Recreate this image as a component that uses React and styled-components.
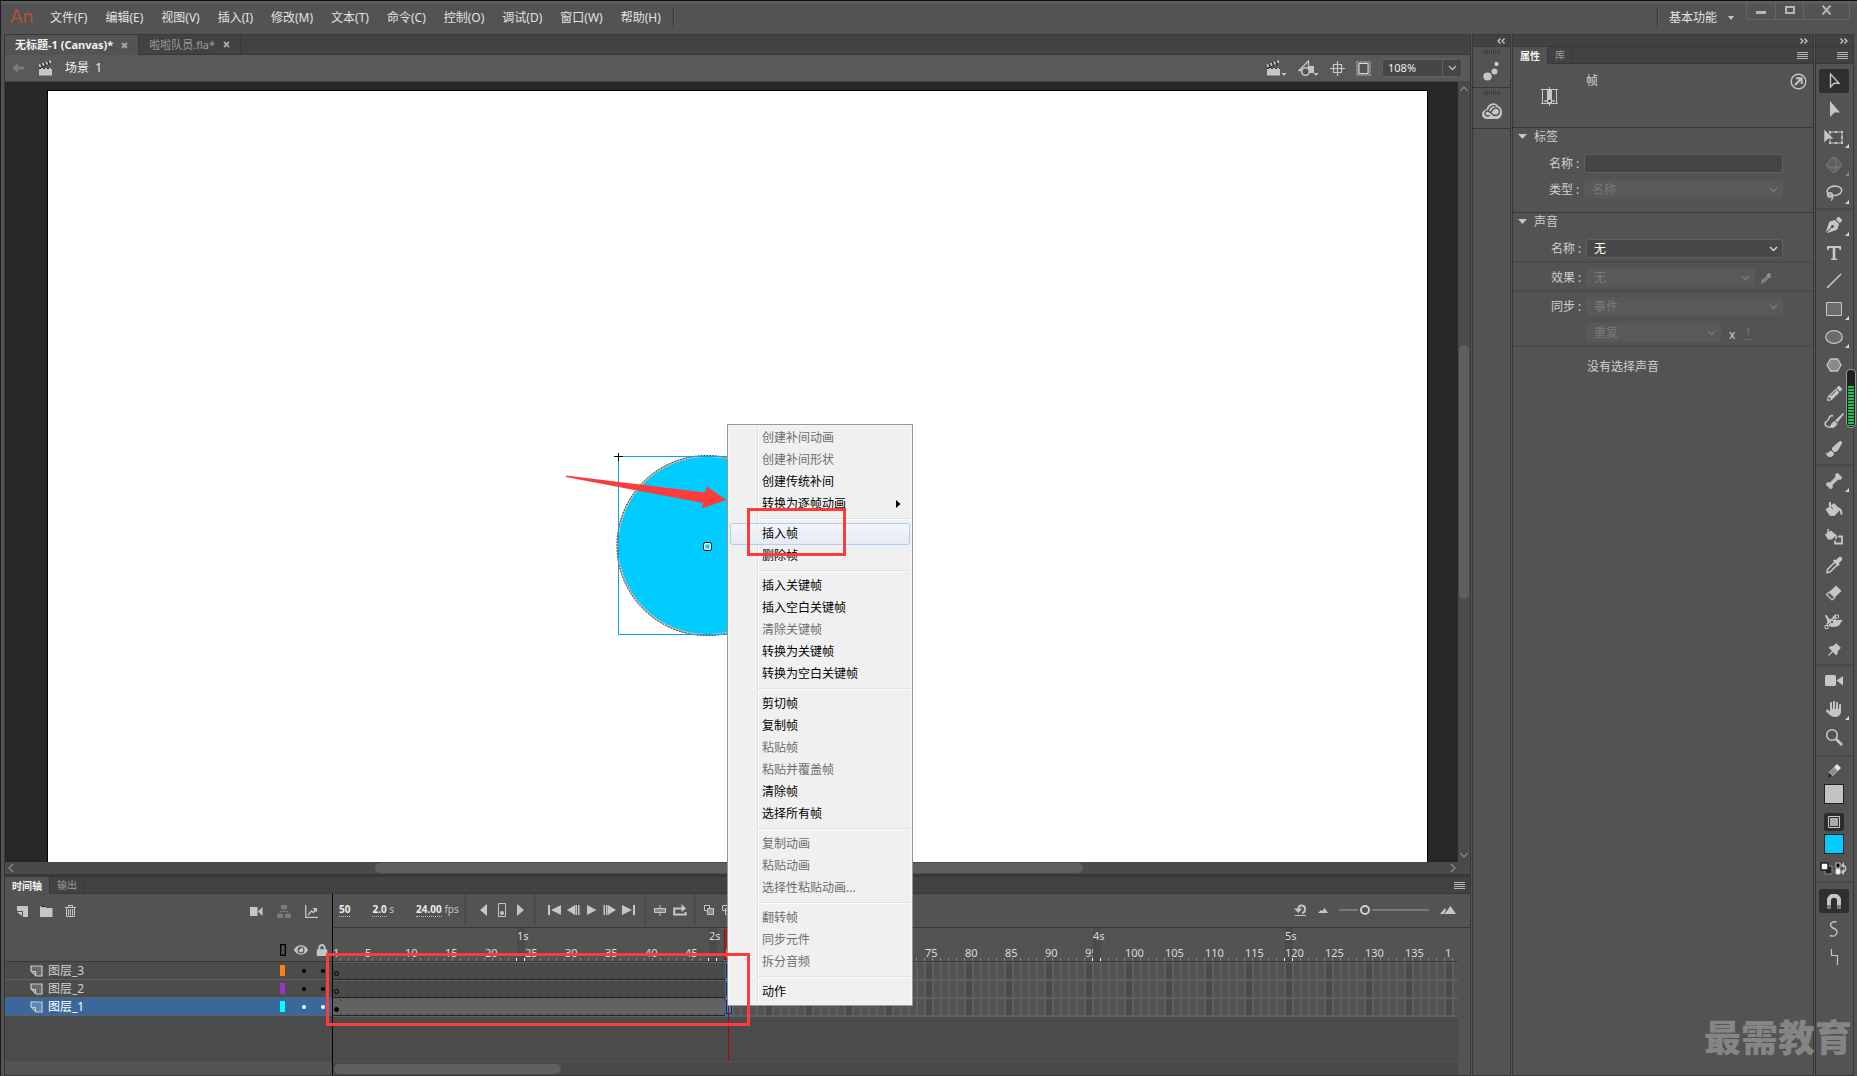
import React from "react";
import styled, { createGlobalStyle, css } from "styled-components";
import { Bone } from "lucide-react";
import {
  FaPenNib,
  FaPencilAlt,
  FaPaintBrush,
  FaFillDrip,
  FaEyeDropper,
  FaEye,
  FaLock,
} from "react-icons/fa";
import { FaHand } from "react-icons/fa6";
import { AiFillPushpin } from "react-icons/ai";

const c = {
  panel: "#535353",
  strip: "#424242",
  line: "#383838",
  soft: "#4a4a4a",
  icon: "#c6c6c6",
  text: "#d6d6d6",
  dim: "#7a7a7a",
  red: "#fc3b3a",
  cyan: "#00ccff",
};

const FRAME = 8;
const FRAME_COUNT = 140;
const PLAYHEAD = 50;

const Global = createGlobalStyle`
  *, *::before, *::after { box-sizing: border-box; }
  html, body { margin: 0; height: 100%; }
  body {
    background: ${c.panel};
    color: ${c.text};
    font: 12px/16px "Noto Sans", "Noto Sans CJK SC", sans-serif;
    overflow: hidden;
  }
  button, input, select { font: inherit; color: inherit; margin: 0; border-radius: 0; }
  button { background: none; border: 0; padding: 0; }
  ul { list-style: none; margin: 0; padding: 0; }
  svg { display: block; flex: none; }
`;

/* ---------- window frame ---------- */

const Window = styled.div`
  position: relative;
  display: flex;
  flex-direction: column;
  height: 100vh;
  min-height: 640px;
  background: ${c.panel};
  border-left: 1px solid #1c1c1c;
  overflow: hidden;
`;

const TitleBar = styled.header`
  display: flex;
  flex: none;
  height: 34px;
  padding: 0 7px 0 9px;
  border-top: 1px solid #111;
  box-shadow: inset 0 3px 0 #5c5c5c;
`;

const Logo = styled.span`
  width: 40px;
  font: 19px/30px Lato, sans-serif;
  color: #b0503a;
`;

const MenuBar = styled.nav`
  display: flex;
  align-items: center;
  gap: 18px;
  height: 33px;
  color: #e2e2e2;
`;

const Rule = styled.span`
  width: 2px;
  height: 20px;
  margin: 6px 0 0 ${(p) => p.$left || 0}px;
  background: #3a3a3a;
  border-right: 1px solid #5f5f5f;
`;

const Workspace = styled.button`
  display: flex;
  align-items: center;
  gap: 11px;
  height: 34px;
  margin: 0 12px 0 10px;
  color: #e2e2e2;
`;

const Spacer = styled.span`
  flex: 1;
`;

const WindowButtons = styled.div`
  display: flex;
  height: 19px;
  border: 1px solid #666;
  border-top: 0;
  border-radius: 0 0 4px 4px;
`;

const WindowButton = styled.button`
  display: grid;
  place-items: center;
  width: ${(p) => p.$w || 28}px;
  color: #b5b5b5;
  & + & { border-left: 1px solid #666; }
`;

const Body = styled.div`
  display: flex;
  flex: 1;
  min-height: 0;
  gap: 1px;
  padding: 0 3px;
`;

const Panel = styled.section`
  display: flex;
  flex-direction: column;
  flex: none;
  min-width: 0;
  border: 1px solid ${c.line};
  width: ${(p) => p.$w}px;
`;

const Main = styled(Panel).attrs({ as: "main" })`
  flex: 1;
  width: auto;
`;

/* ---------- tabs ---------- */

const TabStrip = styled.div`
  display: flex;
  flex: none;
  height: ${(p) => p.$h || 17}px;
  background: ${c.strip};
  border-bottom: 1px solid ${c.line};
  font-size: ${(p) => p.$size || 10}px;
`;

const Tab = styled.button`
  display: flex;
  align-items: center;
  gap: 8px;
  padding: 0 ${(p) => p.$pad || 7}px;
  border-right: 1px solid ${c.line};
  color: #9c9c9c;
  line-height: 14px;
  ${(p) =>
    p.$on &&
    css`
      background: ${c.panel};
      margin-bottom: -1px;
      color: #f2f2f2;
      font-weight: 700;
    `}
`;

const StripEnd = styled.button`
  margin-left: auto;
  padding: 0 ${(p) => p.$pad || 5}px;
`;

const Collapse = styled.button`
  display: flex;
  align-items: center;
  justify-content: flex-end;
  flex: none;
  height: 12px;
  padding-right: 5px;
  background: ${c.strip};
  border-bottom: 1px solid ${c.line};
`;

/* ---------- document area ---------- */

const EditBar = styled.div`
  display: flex;
  align-items: center;
  flex: none;
  height: 27px;
  padding: 0 8px 0 7px;
  background: #595959;
  border-bottom: 1px solid #454545;
  color: #f0f0f0;
`;

const Crumb = styled.span`
  display: flex;
  align-items: center;
  gap: 12px;
`;

const ViewTools = styled.div`
  display: flex;
  align-items: center;
  gap: 11px;
  margin-left: auto;
`;

const ToolIcon = styled.button`
  display: grid;
  place-items: center;
`;

const Zoom = styled.div`
  display: grid;
  grid-template-columns: 60px 18px;
  height: 18px;
  border: 1px solid #616161;
  border-radius: 3px;
  background: #454545;
  input {
    min-width: 0;
    border: 0;
    border-right: 1px solid #616161;
    background: none;
    padding: 0 5px;
    font-size: 11px;
    line-height: 16px;
  }
`;

const StageRow = styled.div`
  display: flex;
  flex: 1;
  min-height: 0;
`;

const Pasteboard = styled.div`
  display: flex;
  flex: 1;
  min-width: 0;
  padding: 8px 30px 0 42px;
  background: #282828;
`;

const Artboard = styled.div`
  position: relative;
  flex: 1;
  background: #fff;
  border: 1px solid #000;
  border-bottom: 0;
`;

const Shape = styled.svg`
  position: absolute;
  left: 561px;
  top: 356px;
`;

const VScroll = styled.div`
  display: flex;
  flex-direction: column;
  align-items: center;
  width: 12px;
  padding: 3px 0;
  background: ${c.soft};
`;

const VThumb = styled.span`
  flex: 253 0 0;
  width: 10px;
  border-radius: 5px;
  background: #5f5f5f;
`;

const HScroll = styled.div`
  display: flex;
  align-items: center;
  flex: none;
  height: 12px;
  padding: 0 14px 0 3px;
  background: ${c.soft};
`;

const HThumb = styled.span`
  flex: ${(p) => p.$grow} 0 0;
  height: 10px;
  border-radius: 5px;
  background: #5f5f5f;
`;

const Gap = styled.span`
  flex: ${(p) => p.$grow} 0 0;
`;

/* ---------- timeline ---------- */

const Timeline = styled.div`
  display: flex;
  flex-direction: column;
  flex: none;
  height: 201px;
  border-top: 3px solid ${c.line};
`;

const TimelineBody = styled.div`
  display: flex;
  flex: 1;
  min-height: 0;
`;

const LayerPane = styled.div`
  display: flex;
  flex-direction: column;
  flex: none;
  width: 328px;
  border-right: 1px solid #000;
`;

const LayerTools = styled.div`
  display: flex;
  align-items: center;
  height: 34px;
  padding: 0 14px 0 12px;
  gap: 12px;
`;

const LayerHead = styled.div`
  display: flex;
  align-items: center;
  justify-content: flex-end;
  gap: 8px;
  height: 33px;
  padding: 10px 4px 0 0;
`;

const LayerRow = styled.li`
  display: flex;
  align-items: center;
  height: 18px;
  padding: 0 7px 0 25px;
  border-top: 1px solid ${(p) => (p.$first ? c.line : "#606060")};
  background: ${(p) => (p.$on ? "#3b689b" : "#4c4c4c")};
  color: ${(p) => (p.$on ? "#fff" : "#d0d0d0")};
  gap: 5px;
`;

const Chip = styled.span`
  width: 5px;
  height: 11px;
  margin: 0 12px 0 auto;
  background: ${(p) => p.$c};
`;

const Dot = styled.span`
  width: 4px;
  height: 4px;
  border-radius: 2px;
  margin-right: ${(p) => (p.$last ? 0 : 10)}px;
  background: ${(p) => (p.$on ? "#fff" : "#000")};
`;

const PaneFill = styled.div`
  flex: 1;
  border-top: 1px solid #606060;
  border-bottom: ${(p) => p.$foot || 0}px solid ${c.panel};
  background: #4b4b4b;
`;

const FramePane = styled.div`
  display: flex;
  flex-direction: column;
  flex: 1;
  min-width: 0;
`;

const Transport = styled.div`
  display: flex;
  flex: none;
  height: 34px;
  padding-right: 14px;
  border-bottom: 1px solid ${c.line};
`;

const Group = styled.div`
  display: flex;
  flex: none;
  align-items: center;
  width: ${(p) => (p.$w ? `${p.$w}px` : "auto")};
  height: 32px;
  gap: ${(p) => p.$gap || 6}px;
  padding-left: ${(p) => p.$pad || 10}px;
  ${(p) => p.$w && "border-right: 2px solid #4a4a4a;"}
  ${(p) => p.$end && "margin-left: auto; padding: 0;"}
`;

const Hot = styled.button`
  font-size: 10px;
  line-height: 13px;
  color: ${(p) => (p.$off ? c.dim : "#c6c6c6")};
  white-space: pre;
  b {
    display: inline-block;
    font-weight: ${(p) => (p.$off ? 400 : 700)};
    color: ${(p) => (p.$off ? c.dim : "#ececec")};
    border-bottom: 1px dotted ${(p) => (p.$off ? c.dim : "#bbb")};
  }
`;

const Slider = styled.input`
  appearance: none;
  width: 90px;
  height: 12px;
  background: linear-gradient(90deg, #7a7a7a 19px, transparent 19px 33px, #7a7a7a 33px) center / 100% 2px no-repeat;
  &::-webkit-slider-thumb {
    appearance: none;
    width: 10px;
    height: 10px;
    border-radius: 5px;
    border: 2px solid #cfcfcf;
    background: transparent;
  }
`;

const FrameArea = styled.div`
  position: relative;
  flex: 1;
  display: flex;
  flex-direction: column;
  margin-right: 12px;
  overflow: hidden;
  background: #4b4b4b;
`;

const Ruler = styled.div`
  display: flex;
  flex: none;
  width: ${FRAME * FRAME_COUNT}px;
  height: 33px;
  overflow: hidden;
  font-size: 11px;
`;

const RulerBox = styled.div`
  flex: none;
  background: ${c.panel};
  border-bottom: 1px solid ${c.line};
`;

const RulerCell = styled.span`
  flex: none;
  width: ${FRAME}px;
  height: 33px;
  padding-top: 1px;
  white-space: nowrap;
  line-height: 13px;
  color: #dcdcdc;
  background: linear-gradient(${(p) => (p.$bright ? "#fff" : "#8a8a8a")}, ${(p) => (p.$bright ? "#fff" : "#8a8a8a")})
    right bottom / 1px 3px no-repeat ${(p) => (p.$second ? "#4b4b4b" : "transparent")};
`;

const Second = styled.span`
  display: block;
  height: 17px;
`;

const Tracks = styled.ul`
  flex: none;
  border-top: 1px solid #5f5f5f;
`;

const Track = styled.li`
  display: flex;
  height: 18px;
  border-bottom: 2px solid #5f5f5f;
  background:
    linear-gradient(90deg, #5f5f5f 1px, transparent 1px 7px, #5f5f5f 7px) 0 0 / 8px 100%,
    linear-gradient(90deg, ${c.panel} 32px, #4a4a4a 32px) 0 0 / 40px 100%;
`;

const Span = styled.span`
  display: flex;
  align-items: flex-end;
  width: ${(p) => p.$frames * FRAME}px;
  height: 17px;
  padding: 0 0 3px 1px;
  border-bottom: 1px solid #262626;
  background:
    linear-gradient(90deg, transparent 7px, #3e3e3e 7px) 0 0 / 8px 2px repeat-x,
    linear-gradient(90deg, transparent 7px, #3e3e3e 7px) 0 100% / 8px 2px repeat-x,
    ${(p) => (p.$on ? "#626262" : "#4a4a4a")};
`;

const Key = styled.span`
  width: 5px;
  height: 5px;
  border-radius: 3px;
  border: 1px solid #000;
  background: ${(p) => (p.$full ? "#000" : "transparent")};
`;

const EndFrame = styled.span`
  width: 8px;
  height: 17px;
  border: 1px solid #3f6fa8;
  border-width: 1px 1px 2px;
  background: #4a7ab5;
  box-shadow: inset 0 0 0 1px #16283f;
`;

const Playhead = styled.div`
  position: absolute;
  left: ${(PLAYHEAD - 1) * FRAME - 1}px;
  top: 2px;
  bottom: 14px;
  width: 10px;
  background: linear-gradient(#b50000, #b50000) 4px 0 / 1px 100% no-repeat;
  &::before {
    content: "";
    display: block;
    height: 30px;
    border: 1px solid #c00000;
    background: rgba(190, 0, 0, 0.35);
  }
`;

const FrameScroll = styled.div`
  display: flex;
  align-items: center;
  height: 14px;
  margin-top: auto;
  padding: 0 1px;
  border-top: 1px solid #535353;
  background: #494949;
`;

/* ---------- side panels ---------- */

const DockItem = styled.button`
  display: flex;
  flex-direction: column;
  align-items: center;
  height: ${(p) => p.$h}px;
  padding-top: 3px;
  gap: ${(p) => p.$gap || 7}px;
  border-bottom: 1px solid ${c.line};
`;

const Grip = styled.span`
  width: 18px;
  height: 4px;
  background: repeating-linear-gradient(90deg, #3e3e3e 0 1px, transparent 1px 2px);
`;

const Summary = styled.div`
  display: flex;
  align-items: flex-start;
  height: 64px;
  padding: 9px 6px 0 28px;
  border-bottom: 1px solid ${c.line};
  > svg:first-child { margin: 14px 28px 0 0; }
  > button { margin-left: auto; }
`;

const Section = styled.section`
  border-bottom: ${(p) => (p.$open ? 0 : 1)}px solid ${c.line};
`;

const SectionHead = styled.button`
  display: flex;
  align-items: center;
  gap: 7px;
  height: 17px;
  padding-left: 5px;
  color: #cfcfcf;
`;

const Fields = styled.div`
  display: grid;
  gap: 7px;
  padding: ${(p) => p.$top || 5}px 30px ${(p) => p.$bottom || 3}px ${(p) => p.$left || 38}px;
  ${(p) => p.$rule && "border-bottom: 2px solid #4b4b4b;"}
`;

const Field = styled.div`
  display: flex;
  align-items: center;
  height: 19px;
  color: #cfcfcf;
  label { width: 35px; }
`;

const TextInput = styled.input`
  flex: 1;
  min-width: 0;
  height: 19px;
  border: 1px solid #606060;
  border-radius: 3px;
  background: #454545;
  padding: 0 7px;
`;

const SelectBox = styled.div`
  display: grid;
  flex: ${(p) => (p.$w ? `0 0 ${p.$w}px` : 1)};
  align-items: center;
  height: 19px;
  border: 1px solid ${(p) => (p.$off ? "#595959" : "#606060")};
  border-radius: 3px;
  background: ${(p) => (p.$off ? "#595959" : "#484848")};
  color: ${(p) => (p.$off ? c.dim : "#fff")};
  > select {
    grid-area: 1 / 1;
    appearance: none;
    height: 17px;
    border: 0;
    background: none;
    padding: 0 7px;
    opacity: 1;
    line-height: 16px;
  }
  > svg {
    grid-area: 1 / 1;
    justify-self: end;
    margin-right: 4px;
    pointer-events: none;
  }
`;

const Multiply = styled.span`
  margin: 4px 10px 0 8px;
`;

const Note = styled.p`
  margin: 12px 0 0 74px;
  color: #cfcfcf;
`;

/* ---------- tool bar ---------- */

const ToolGroup = styled.div`
  display: flex;
  flex-direction: column;
  align-items: center;
  padding: ${(p) => p.$top || 1}px 1px ${(p) => p.$bottom || 1}px 0;
  border-bottom: ${(p) => (p.$last ? 0 : 2)}px solid #4a4a4a;
`;

const Tool = styled.button`
  display: grid;
  place-items: center;
  width: 30px;
  height: ${(p) => (p.$on ? 24 : 28)}px;
  margin: ${(p) => (p.$on ? 2 : 0)}px 0;
  border-radius: 3px;
  color: ${(p) => (p.$off ? "#727272" : c.icon)};
  background: ${(p) => (p.$on ? "#2f2f2f" : "none")};
  > * { grid-area: 1 / 1; }
`;

const Corner = styled.svg`
  place-self: end;
  margin: 0 0 3px 0;
`;

const Swatch = styled.button`
  width: 20px;
  height: 20px;
  margin: ${(p) => p.$top || 0}px 0 ${(p) => p.$bottom || 0}px;
  border: 1px solid #222;
  background: ${(p) => p.$c};
`;

const FillMode = styled.button`
  display: grid;
  place-items: center;
  width: 20px;
  height: 18px;
  border-radius: 3px;
  background: #2c2c2c;
`;

/* ---------- floating parts ---------- */

const Menu = styled.ul`
  position: absolute;
  left: 726px;
  top: 424px;
  width: 186px;
  padding: 2px;
  border: 1px solid #979797;
  background: linear-gradient(90deg, #f0f0f0 29px, #e0e0e0 29px 30px, #fff 30px 31px, #f0f0f0 31px);
  box-shadow: inset 0 0 0 1px #f5f5f5;
  color: #000;
`;

const MenuItem = styled.button`
  display: flex;
  align-items: center;
  justify-content: space-between;
  width: 180px;
  height: 22px;
  padding: 0 8px 0 31px;
  border: 1px solid transparent;
  border-radius: 3px;
  color: ${(p) => (p.disabled ? "#6d6d6d" : "#000")};
  ${(p) =>
    p.$hot &&
    css`
      border-color: #aecff7;
      background: linear-gradient(rgba(245, 247, 250, 0.7), rgba(225, 234, 246, 0.8));
    `}
`;

const MenuRule = styled.li`
  height: 2px;
  margin: 3px 0 3px 28px;
  background: #e0e0e0;
  border-bottom: 1px solid #fff;
`;

const Marker = styled.div`
  position: absolute;
  left: ${(p) => p.$x}px;
  top: ${(p) => p.$y}px;
  width: ${(p) => p.$w}px;
  height: ${(p) => p.$h}px;
  border: 3px solid ${c.red};
  pointer-events: none;
`;

const ArrowMark = styled.svg`
  position: absolute;
  left: 565px;
  top: 474px;
  pointer-events: none;
`;

const Meter = styled.div`
  position: absolute;
  right: 1px;
  top: 369px;
  width: 10px;
  height: 59px;
  padding: 16px 1px 1px;
  border: 1px solid #9a9a9a;
  border-radius: 4px;
  background: #1f1f1f;
  &::before {
    content: "";
    display: block;
    height: 100%;
    background: repeating-linear-gradient(#1fbf5a 0 2px, #12331d 2px 3px);
  }
`;

const Watermark = styled.div`
  position: absolute;
  right: 5px;
  bottom: 18px;
  font: 900 37px/44px "Noto Sans CJK SC", sans-serif;
  color: rgba(190, 190, 190, 0.48);
  pointer-events: none;
`;

/* ---------- drawings ---------- */

const Svg = ({ w = 20, h = w, vb, children, ...rest }) => (
  <svg width={w} height={h} viewBox={vb || `0 0 ${w} ${h}`} fill="none" stroke="none" aria-hidden="true" {...rest}>
    {children}
  </svg>
);

const Chevron = ({ color = "#bdbdbd" }) => (
  <Svg w={9} h={6}>
    <path d="M1 1l3.5 3.5L8 1" stroke={color} strokeWidth="1.3" />
  </Svg>
);

const ScrollArrow = ({ d }) => (
  <Svg w={8} h={8}>
    <path d={d} stroke="#8e8e8e" strokeWidth="1.2" />
  </Svg>
);

const Burger = () => (
  <Svg w={11} h={9}>
    <path d="M0 1.5h11M0 3.5h11M0 5.5h11M0 7.5h11" stroke="#b5b5b5" shapeRendering="crispEdges" />
  </Svg>
);

const Twist = ({ left }) => (
  <Svg w={8} h={6}>
    <path
      d={left ? "M3.5 .5L1 3l2.500 2.500M7.500 .5L5 3l2.500 2.500" : "M.5 .5L3 3 .5 5.500M4.500 .5L7 3 4.500 5.500"}
      stroke="#c8c8c8"
      strokeWidth="1.300"
    />
  </Svg>
);

const Close = () => (
  <Svg w={7} h={7}>
    <path d="M1 1l5 5M6 1L1 6" stroke="#a9a9a9" strokeWidth="1.8" />
  </Svg>
);

const Clapper = ({ drop }) => (
  <Svg w={drop ? 22 : 16} h={17}>
    <path d="M2 8h13v7.500H2z" fill={c.icon} />
    <path d="M2 7L14 1.500" stroke="#2c2c2c" strokeWidth="4" />
    <path d="M2 6L14 1.500" stroke={c.icon} strokeWidth="3" strokeDasharray="2 1.600" />
    <path d="M2 8.500h13" stroke="#2c2c2c" strokeWidth="1" strokeDasharray="2 2" />
    {drop && <path d="M16.500 13h5L19 16z" fill={c.icon} />}
  </Svg>
);

const Corn = ({ off }) => (
  <Corner width="4" height="4" viewBox="0 0 4 4" aria-hidden="true">
    <path d="M4 0v4H0z" fill={off ? "#858585" : "#dcdcdc"} />
  </Corner>
);

const tri = (d) => <path d={d} fill={c.icon} />;

const LayerGlyph = ({ on }) => (
  <Svg w={13} h={12}>
    <path d="M1 1h11v10H6L1 6z" fill={on ? "#5b86bd" : "#6a6a6a"} stroke="#c9c9c9" strokeWidth="1.200" />
    <path d="M1 6.500h4.500V11" stroke="#c9c9c9" strokeWidth="1.200" />
    <path d="M1 7.500L5 11.500H1z" fill={on ? "#3b689b" : "#4c4c4c"} />
  </Svg>
);

const tools1 = [
  {
    name: "选择工具",
    on: true,
    art: (
      <Svg w={18} h={20}>
        <path d="M5.500 3v13l3.600-3.800H14z" stroke={c.icon} strokeWidth="1.400" />
      </Svg>
    ),
  },
  {
    name: "部分选取工具",
    art: (
      <Svg w={18} h={20}>
        <path d="M5 2v16l4.500-4.500H15z" fill={c.icon} />
      </Svg>
    ),
  },
  {
    name: "任意变形工具",
    corner: true,
    art: (
      <Svg w={20} h={18}>
        <path d="M6 4h12v11H6z" stroke={c.icon} />
        <path d="M5 3h2v2H5zM11 3h2v2h-2zM17 3h2v2h-2zM17 8.500h2v2h-2zM17 14h2v2h-2zM11 14h2v2h-2zM5 14h2v2H5z" fill={c.icon} />
        <path d="M0 1v14l4-4h6z" fill={c.icon} stroke={c.panel} strokeWidth=".6" />
      </Svg>
    ),
  },
  {
    name: "3D 旋转工具",
    off: true,
    corner: true,
    art: (
      <Svg w={18}>
        <path d="M9 1.500l3 1.500 4 5v2l-4 4.500-3 2-3-2L2 10V8l4-5z" stroke="#727272" fill="#5f5f5f" strokeWidth="1.200" />
        <path d="M1 9.500c4 3 12 3 16 0M9 1c3 4 3 12 0 16" stroke="#757575" strokeWidth="1.300" />
      </Svg>
    ),
  },
  {
    name: "套索工具",
    corner: true,
    art: (
      <Svg w={18}>
        <path d="M4 11C-.5 7 4 2.200 9.500 2c5 0 8 2.500 7 5.500-1 2.800-5 4.300-8.500 4" stroke={c.icon} strokeWidth="1.500" />
        <circle cx="5" cy="11" r="2.300" stroke={c.icon} strokeWidth="1.400" />
        <path d="M3 10.500l4 1c1.500 2 0 4-1 5" stroke={c.icon} strokeWidth="1.300" />
      </Svg>
    ),
  },
];

const tools2 = [
  { name: "钢笔工具", corner: true, art: <FaPenNib size={16} /> },
  {
    name: "文本工具",
    art: (
      <Svg w={16}>
        <path d="M1 1h14v4h-1.500l-.5-2H9.300v10.500H11V15H5v-1.500h1.700V3H3l-.5 2H1z" fill={c.icon} />
      </Svg>
    ),
  },
  {
    name: "线条工具",
    art: (
      <Svg w={16}>
        <path d="M1 15L15 1" stroke={c.icon} strokeWidth="1.600" />
      </Svg>
    ),
  },
  {
    name: "矩形工具",
    corner: true,
    art: (
      <Svg w={16} h={14}>
        <path d="M.5 .5h15v13H.5z" fill="#6c6c6c" stroke={c.icon} />
      </Svg>
    ),
  },
  {
    name: "椭圆工具",
    corner: true,
    art: (
      <Svg w={18} h={14}>
        <ellipse cx="9" cy="7" rx="8.300" ry="6.300" fill="#6c6c6c" stroke={c.icon} strokeWidth="1.200" />
      </Svg>
    ),
  },
  {
    name: "多角星形工具",
    art: (
      <Svg w={16} h={14}>
        <path d="M4.500 1h7l3.500 6-3.500 6h-7L1 7z" fill="#8a8a8a" stroke={c.icon} strokeWidth="1.300" />
      </Svg>
    ),
  },
  { name: "铅笔工具", art: <FaPencilAlt size={15} /> },
  {
    name: "画笔工具",
    art: (
      <Svg w={20} h={16}>
        <path d="M19 0l1 1-6.500 8.500-2.500-2z" fill={c.icon} />
        <path d="M10.500 8.500l2.500 2c-1 3.500-4 4.500-8 4 2.500-1.500 2.500-5 5.500-6z" fill={c.icon} stroke={c.icon} strokeWidth=".8" />
        <path d="M9 3C5 1 5 8 2.500 8.500 0 10 1 14 5 14" stroke={c.icon} strokeWidth="1.600" />
      </Svg>
    ),
  },
  { name: "画笔", art: <FaPaintBrush size={16} /> },
];

const tools3 = [
  { name: "骨骼工具", corner: true, art: <Bone size={18} fill={c.icon} strokeWidth={1} /> },
  {
    name: "颜料桶工具",
    art: (
      <Svg w={18} h={16}>
        <path d="M1 8.500L9 2.500l6 6-5.500 6H5z" fill={c.icon} stroke={c.icon} strokeWidth=".8" strokeLinejoin="round" />
        <path d="M5 1v5" stroke={c.icon} strokeWidth="2" />
        <path d="M13.500 7.500c2 .5 3 2.500 2.800 6" stroke={c.icon} strokeWidth="2" />
        <path d="M5.500 5.500L8 8" stroke={c.panel} />
      </Svg>
    ),
  },
  {
    name: "墨水瓶工具",
    art: (
      <Svg w={18} h={16}>
        <path d="M0 5.500l6-4 5 4.500-4 4.500H3z" fill={c.icon} />
        <path d="M3 0v4M9.500 5.500c2 1 2 3 1.500 4.500" stroke={c.icon} strokeWidth="1.500" />
        <path d="M13 7.500h4v7h-7v-3" stroke={c.icon} strokeWidth="1.800" />
      </Svg>
    ),
  },
  {
    name: "滴管工具",
    art: (
      <Svg w={18}>
        <path d="M10.500 5.500L2.500 13.500l-.5 3 3-.5 8-8" stroke={c.icon} strokeWidth="1.600" />
        <path d="M9 3.500l2 .5 3-3c2-1 4 1 3 3l-3 3 .5 2-1.500 1L8 5z" fill={c.icon} />
      </Svg>
    ),
  },
  {
    name: "橡皮擦工具",
    art: (
      <Svg w={18}>
        <path d="M2 10L11 1.500 16.500 7 7.500 15.500z" fill={c.icon} />
        <path d="M1.500 10.500l3-2.500 5.500 5.500-3 2.500z" fill="#5d5d5d" stroke={c.icon} strokeWidth="1.200" />
      </Svg>
    ),
  },
  {
    name: "宽度工具",
    art: (
      <Svg w={20} h={16}>
        <path d="M1 2c3-1 3 5 6 4 2-1 3-5 5-4 1 2-1 4 0 5 2 1 4-2 7 1-3 0-2 4-5 5-4 2-9 1-12-2 3-2 0-6-1-8z" fill={c.icon} />
        <path d="M2 14L13 3" stroke="#444" />
        <path d="M1 12.500h3v3H1zM6.500 7.500h3v3h-3zM11.500 2h3v3h-3z" fill={c.panel} stroke={c.icon} />
      </Svg>
    ),
  },
  { name: "资源变形工具", art: <AiFillPushpin size={17} /> },
];

const tools4 = [
  {
    name: "摄像头",
    art: (
      <Svg w={18} h={12}>
        <rect x="0" y="0" width="11" height="11" rx="1.500" fill={c.icon} />
        <path d="M11.500 5.500L18 1v9.500z" fill={c.icon} />
      </Svg>
    ),
  },
  { name: "手形工具", corner: true, art: <FaHand size={16} /> },
  {
    name: "缩放工具",
    art: (
      <Svg w={18}>
        <circle cx="7" cy="7" r="5.300" stroke={c.icon} strokeWidth="1.600" />
        <path d="M11 11l6 6" stroke={c.icon} strokeWidth="2.600" />
      </Svg>
    ),
  },
];

const renderTools = (list) =>
  list.map((t) => (
    <Tool key={t.name} $on={t.on} $off={t.off} aria-label={t.name}>
      {t.art}
      {t.corner && <Corn off={t.off} />}
    </Tool>
  ));

/* ---------- data ---------- */

const menus = ["文件(F)", "编辑(E)", "视图(V)", "插入(I)", "修改(M)", "文本(T)", "命令(C)", "控制(O)", "调试(D)", "窗口(W)", "帮助(H)"];

const contextMenu = [
  [["创建补间动画", 0], ["创建补间形状", 0], ["创建传统补间", 1], ["转换为逐帧动画", 1, "sub"]],
  [["插入帧", 1, "hot"], ["删除帧", 1]],
  [["插入关键帧", 1], ["插入空白关键帧", 1], ["清除关键帧", 0], ["转换为关键帧", 1], ["转换为空白关键帧", 1]],
  [["剪切帧", 1], ["复制帧", 1], ["粘贴帧", 0], ["粘贴并覆盖帧", 0], ["清除帧", 1], ["选择所有帧", 1]],
  [["复制动画", 0], ["粘贴动画", 0], ["选择性粘贴动画...", 0]],
  [["翻转帧", 0], ["同步元件", 0], ["拆分音频", 0]],
  [["动作", 1]],
];

const layers = [
  { name: "图层_3", color: "#ff8010" },
  { name: "图层_2", color: "#9a33cc" },
  { name: "图层_1", color: "#00ffff", on: true },
];

const frames = Array.from({ length: FRAME_COUNT }, (_, i) => i + 1);

// The last visible frame has room for a single digit only.
const frameLabel = (f) => {
  if (f === FRAME_COUNT) return String(f)[0];
  return f === 1 || f % 5 === 0 ? f : "";
};

/* ---------- sections ---------- */

const Title = () => (
  <TitleBar>
    <Logo>An</Logo>
    <MenuBar>
      {menus.map((m) => (
        <button key={m}>{m}</button>
      ))}
    </MenuBar>
    <Rule $left={12} />
    <Spacer />
    <Rule />
    <Workspace>
      基本功能
      <Svg w={6} h={4}>{tri("M0 0h6L3 4z")}</Svg>
    </Workspace>
    <WindowButtons>
      <WindowButton aria-label="最小化">
        <Svg w={10} h={10}><path d="M0 6h10v3H0z" fill="currentColor" /></Svg>
      </WindowButton>
      <WindowButton aria-label="最大化">
        <Svg w={10} h={8}><path d="M1 1h8v6H1z" stroke="currentColor" strokeWidth="2" /></Svg>
      </WindowButton>
      <WindowButton $w={46} aria-label="关闭">
        <Svg w={11} h={10}><path d="M1.500 .5l8 9M9.500 .5l-8 9" stroke="currentColor" strokeWidth="2" /></Svg>
      </WindowButton>
    </WindowButtons>
  </TitleBar>
);

const Document = () => (
  <>
    <TabStrip $h={20} $size={11}>
      <Tab $on $pad={10}>无标题-1 (Canvas)*<Close /></Tab>
      <Tab $pad={10}>啦啦队员.fla*<Close /></Tab>
    </TabStrip>
    <EditBar>
      <Crumb>
        <Svg w={13} h={12}><path d="M0 6l6-5v3.500h6v3H6V11z" fill="#7b7b7b" /></Svg>
        <span><Clapper /></span>
        <span>场景&nbsp; 1</span>
      </Crumb>
      <ViewTools>
        <ToolIcon aria-label="编辑场景"><Clapper drop /></ToolIcon>
        <ToolIcon aria-label="编辑元件">
          <Svg w={21} h={17}>
            <path d="M10.500 6H16v7h-5.500z" fill={c.icon} />
            <path d="M1 10.500L10.500 1v9.500z" stroke={c.icon} strokeWidth="1.300" />
            <circle cx="7.500" cy="11.500" r="3.800" fill={c.panel} stroke={c.icon} strokeWidth="1.600" />
            <path d="M15.500 13h5L18 16z" fill={c.icon} />
          </Svg>
        </ToolIcon>
        <ToolIcon aria-label="舞台居中">
          <Svg w={15} h={15}>
            <path d="M7.500 0v15M0 7.500h15M3.500 3.500h8v8h-8z" stroke={c.icon} strokeWidth="1.200" />
          </Svg>
        </ToolIcon>
        <ToolIcon aria-label="剪切舞台外部的内容">
          <Svg w={15} h={15}>
            <path d="M0 0h15v15H0z" fill="#8a8a8a" />
            <path d="M0 4l4-4M0 8l8-8M0 12L12 0M0 15L15 0M3 15L15 3M7 15l8-8M11 15l4-4" stroke="#666" />
            <path d="M3 2.500h9v10H3z" fill={c.panel} stroke="#ddd" />
          </Svg>
        </ToolIcon>
        <Zoom>
          <input aria-label="缩放" defaultValue="108%" />
          <ToolIcon aria-label="缩放级别"><Chevron /></ToolIcon>
        </Zoom>
      </ViewTools>
    </EditBar>
    <StageRow>
      <Pasteboard>
        <Artboard>
          <Shape width="200" height="194" viewBox="0 0 200 194" aria-hidden="true">
            <circle cx="98" cy="98.500" r="89.500" fill={c.cyan} stroke="#bdbdbd" strokeWidth="2" />
            <circle cx="98" cy="98.500" r="90" fill="none" stroke="#222" strokeWidth="1" strokeDasharray="1.500 1.500" />
            <path d="M9.500 9.500h178v178H9.500z" fill="none" stroke="#0aa2f5" />
            <path d="M9.500 6v8M5 9.500h9" stroke="#000" />
            <rect x="94.500" y="95.500" width="8" height="8" rx="2" fill="#fff" stroke="#000" />
            <rect x="96.500" y="97.500" width="4" height="4" fill={c.cyan} stroke="#7fe5ff" />
          </Shape>
        </Artboard>
      </Pasteboard>
      <VScroll>
        <ScrollArrow d="M0 6l4-4 4 4" />
        <Gap $grow={252} />
        <VThumb />
        <Gap $grow={252} />
        <ScrollArrow d="M0 2l4 4 4-4" />
      </VScroll>
    </StageRow>
    <HScroll>
      <ScrollArrow d="M5 0L1 4l4 4" />
      <Gap $grow={359} />
      <HThumb $grow={708} />
      <Gap $grow={365} />
      <ScrollArrow d="M3 0l4 4-4 4" />
    </HScroll>
  </>
);

const TimelinePanel = () => (
  <Timeline>
    <TabStrip>
      <Tab $on>时间轴</Tab>
      <Tab>输出</Tab>
      <StripEnd aria-label="面板菜单"><Burger /></StripEnd>
    </TabStrip>
    <TimelineBody>
      <LayerPane>
        <LayerTools>
          <ToolIcon aria-label="新建图层">
            <Svg w={11} h={11}>
              <path d="M0 0h11v11H6V5H0z" fill={c.icon} />
              <path d="M0 6h5v4z" fill={c.icon} />
            </Svg>
          </ToolIcon>
          <ToolIcon aria-label="新建文件夹">
            <Svg w={13} h={11}>
              <path d="M0 0h5l1 2h6.500v9H0z" fill={c.icon} />
              <path d="M1 .5h4" stroke="#222" />
            </Svg>
          </ToolIcon>
          <ToolIcon aria-label="删除">
            <Svg w={11} h={12}>
              <path d="M0 2.500h11M3.500 2V.5h4V2M1.500 3v8.500h8V3M3.500 4v6.500M5.500 4v6.500M7.500 4v6.500" stroke={c.icon} />
            </Svg>
          </ToolIcon>
          <Spacer />
          <ToolIcon aria-label="添加摄像头">
            <Svg w={13} h={9}>{tri("M0 0h7.500v9H0zM8 4.500L12.500 0v9z")}</Svg>
          </ToolIcon>
          <ToolIcon aria-label="显示父级视图">
            <Svg w={18} h={13}>
              <path d="M6 0h6v4H6zM2 9h6v4H2zM10 9h6v4h-6z" fill="#7b7b7b" />
              <path d="M9 4v2.500M5 9V6.500h8V9" stroke="#7b7b7b" />
            </Svg>
          </ToolIcon>
          <ToolIcon aria-label="图层深度">
            <Svg w={13} h={13}>
              <path d="M.7 0v12.300H13M3 10l3.500-4 2 1.500L11 4" stroke={c.icon} strokeWidth="1.300" />
              {tri("M7.500 3H12v4.500z")}
            </Svg>
          </ToolIcon>
        </LayerTools>
        <LayerHead>
          <Svg w={6} h={12}><path d="M.7 .7h4.600v10.600H.7z" stroke="#000" strokeWidth="1.300" /></Svg>
          <FaEye size={14} color={c.icon} />
          <FaLock size={12} color={c.icon} />
        </LayerHead>
        <ul>
          {layers.map((l, i) => (
            <LayerRow key={l.name} $on={l.on} $first={i === 0}>
              <LayerGlyph on={l.on} />
              {l.name}
              <Chip $c={l.color} />
              <Dot $on={l.on} />
              <Dot $on={l.on} $last />
            </LayerRow>
          ))}
        </ul>
        <PaneFill $foot={14} />
      </LayerPane>
      <FramePane>
        <Transport>
          <Group $gap={22} $pad={6} $w={133}>
            <Hot><b>50</b></Hot>
            <Hot><b>2.0</b> s</Hot>
            <Hot><b>24.00</b> fps</Hot>
          </Group>
          <Group $gap={11} $pad={14} $w={70}>
            <ToolIcon aria-label="上一关键帧"><Svg w={7} h={12}>{tri("M7 0v12L0 6z")}</Svg></ToolIcon>
            <ToolIcon aria-label="插入关键帧">
              <Svg w={8} h={14}>
                <path d="M.5 .5h7v13h-7z" stroke={c.icon} />
                <circle cx="4" cy="10" r="2" fill={c.icon} />
              </Svg>
            </ToolIcon>
            <ToolIcon aria-label="下一关键帧"><Svg w={7} h={12}>{tri("M0 0v12l7-6z")}</Svg></ToolIcon>
          </Group>
          <Group $gap={6} $pad={12} $w={110}>
            <ToolIcon aria-label="转到第一帧"><Svg w={13} h={10}>{tri("M0 0h2v10H0zM13 0v10L3 5z")}</Svg></ToolIcon>
            <ToolIcon aria-label="后退一帧"><Svg w={13} h={10}>{tri("M0 5l8-5v10zM8.500 0H10v10H8.500zM11 0h1.500v10H11z")}</Svg></ToolIcon>
            <ToolIcon aria-label="播放"><Svg w={11} h={10}>{tri("M1 0l9.500 5L1 10z")}</Svg></ToolIcon>
            <ToolIcon aria-label="前进一帧"><Svg w={13} h={10}>{tri("M.5 0H2v10H.5zM3 0h1.500v10H3zM5 0l8 5-8 5z")}</Svg></ToolIcon>
            <ToolIcon aria-label="转到最后一帧"><Svg w={13} h={10}>{tri("M0 0l10 5-10 5zM11 0h2v10h-2z")}</Svg></ToolIcon>
          </Group>
          <Group $gap={7} $pad={8} $w={50}>
            <ToolIcon aria-label="帧居中">
              <Svg w={12} h={11}>
                <path d="M6 0v11" stroke={c.icon} />
                <path d="M.5 3.500h11v4H.5z" fill="#8a8a8a" stroke={c.icon} />
              </Svg>
            </ToolIcon>
            <ToolIcon aria-label="循环">
              <Svg w={14} h={12}>
                <path d="M5 4.500H1.200v6h11.500V8M4 4.500h5" stroke={c.icon} strokeWidth="2" />
                {tri("M8.500 0L13 4.500 8.500 8z")}
              </Svg>
            </ToolIcon>
          </Group>
          <Group $gap={7} $pad={8}>
            <ToolIcon aria-label="绘图纸外观">
              <Svg w={11} h={10}>
                <path d="M.5 .5h5v5h-5z" fill="#444" stroke={c.icon} />
                <path d="M3.500 3.500h6v6h-6z" fill="#8a8a8a" stroke={c.icon} />
              </Svg>
            </ToolIcon>
            <ToolIcon aria-label="绘图纸外观轮廓">
              <Svg w={11} h={10}>
                <path d="M.5 .5h5v5h-5zM3.500 3.500h6v6h-6z" fill={c.panel} stroke={c.icon} />
              </Svg>
            </ToolIcon>
          </Group>
          <Group $gap={11} $end>
            <ToolIcon aria-label="重置缩放">
              <Svg w={13} h={12}>
                <path d="M4.500 6V4.500C4.500 0 11.500 .5 11 5.500 10.700 8 9.500 9 8 9" stroke={c.icon} strokeWidth="2" />
                {tri("M0 4.500h8L4.500 9z")}
                <path d="M1 11.500h11" stroke={c.icon} />
              </Svg>
            </ToolIcon>
            <Svg w={10} h={5}>{tri("M0 5l3-3 1.500 1L6.500 0 10 5z")}</Svg>
            <Slider type="range" aria-label="时间轴缩放" min="0" max="100" defaultValue="26" />
            <Svg w={16} h={8}>{tri("M0 8l5-6 1 1.500L4 8zM4.500 8L10.500 0 16 8z")}</Svg>
          </Group>
        </Transport>
        <FrameArea>
          <RulerBox>
            <Ruler>
              {frames.map((f) => (
                <RulerCell key={f} $second={f % 24 === 0} $bright={f % 24 === 0 || f % 24 === 23}>
                  <Second>{f % 24 === 0 ? `${f / 24}s` : ""}</Second>
                  {frameLabel(f)}
                </RulerCell>
              ))}
            </Ruler>
          </RulerBox>
          <Tracks>
            {layers.map((l) => (
              <Track key={l.name}>
                <Span $frames={PLAYHEAD - 1} $on={l.on}><Key $full={l.on} /></Span>
                <EndFrame />
              </Track>
            ))}
          </Tracks>
          <Playhead />
          <FrameScroll>
            <HThumb $grow={227} />
            <Gap $grow={896} />
          </FrameScroll>
        </FrameArea>
      </FramePane>
    </TimelineBody>
  </Timeline>
);

const Choice = ({ id, value, w, off }) => (
  <SelectBox $w={w} $off={off}>
    <select id={id} aria-label={value}>
      <option>{value}</option>
    </select>
    <Chevron color={off ? "#7a7a7a" : "#dedede"} />
  </SelectBox>
);

const Properties = () => (
  <Panel $w={302}>
    <Collapse aria-label="折叠面板"><Twist /></Collapse>
    <TabStrip>
      <Tab $on>属性</Tab>
      <Tab>库</Tab>
      <StripEnd aria-label="面板菜单"><Burger /></StripEnd>
    </TabStrip>
    <Summary>
      <Svg w={17} h={19}>
        <path d="M0 2.500h17M0 16.500h17M1.500 2v15M15.500 2v15M8.500 0v19" stroke={c.icon} />
        <path d="M6 3h5v13H6z" fill={c.icon} />
        <path d="M3.500 13h2v2h-2zM11.500 13h2v2h-2z" fill={c.icon} />
        <path d="M7.500 13h2v2h-2z" fill="#222" />
      </Svg>
      <span>帧</span>
      <button aria-label="动作">
        <Svg w={17} h={17}>
          <circle cx="8.500" cy="8.500" r="7.300" stroke={c.icon} strokeWidth="1.400" />
          <path d="M5 12l6-6M6 5.300h5.700V11" stroke={c.icon} strokeWidth="1.900" />
        </Svg>
      </button>
    </Summary>
    <Section>
      <SectionHead><Svg w={9} h={5}>{tri("M0 0h9L4.500 5z")}</Svg>标签</SectionHead>
      <Fields $top={9} $bottom={13} $left={36}>
        <Field>
          <label htmlFor="label-name">名称 :</label>
          <TextInput id="label-name" />
        </Field>
        <Field>
          <label htmlFor="label-type">类型 :</label>
          <Choice id="label-type" value="名称" off />
        </Field>
      </Fields>
    </Section>
    <Section $open>
      <SectionHead><Svg w={9} h={5}>{tri("M0 0h9L4.500 5z")}</Svg>声音</SectionHead>
      <Fields $top={9} $rule>
        <Field>
          <label htmlFor="sound-name">名称 :</label>
          <Choice id="sound-name" value="无" />
        </Field>
      </Fields>
      <Fields $rule>
        <Field>
          <label htmlFor="sound-effect">效果 :</label>
          <Choice id="sound-effect" value="无" w={169} off />
          <Spacer />
          <Svg w={26} h={12}>
            <path d="M7.500 6l3-3 3 3-1 1-1-.5-5 5.300-4 1.200L3.500 9z" transform="translate(1 -1)" fill="#808080" />
            <path d="M10.500 2c1-2 4-1 3 1.500l-1.500 2L9.500 3z" fill="#909090" />
          </Svg>
        </Field>
      </Fields>
      <Fields $rule>
        <Field>
          <label htmlFor="sound-sync">同步 :</label>
          <Choice id="sound-sync" value="事件" off />
        </Field>
        <Field>
          <label aria-label="循环方式" htmlFor="sound-loop" />
          <Choice id="sound-loop" value="重复" w={135} off />
          <Multiply>x</Multiply>
          <Hot $off><b>1</b></Hot>
        </Field>
      </Fields>
      <Note>没有选择声音</Note>
    </Section>
  </Panel>
);

const Dock = () => (
  <Panel $w={39}>
    <Collapse aria-label="展开面板"><Twist left /></Collapse>
    <DockItem $h={41} aria-label="画笔库">
      <Grip />
      <Svg w={18} h={20}>
        <ellipse cx="4.500" cy="15.500" rx="4.200" ry="4" fill={c.icon} />
        <circle cx="11.500" cy="10.500" r="3" fill={c.icon} />
        <circle cx="13.500" cy="3" r="2.200" fill={c.icon} />
      </Svg>
    </DockItem>
    <DockItem $h={41} aria-label="Creative Cloud">
      <Grip />
      <Svg w={22} h={18}>
        <path d="M6 17C-.5 17-.5 8 5.500 7.500 7 .5 15-.5 17 4c6 1.500 5 13-1.500 13z" fill={c.icon} />
        <path d="M9 13.500C3.500 16 2.500 9 6.500 9c3 0 4 4.500 8 4.500 5.500 0 5-8 0-7.500-3 0-3.500 3-5 5M7.500 8.500c1.500-5 5.500-5.500 7.500-4" stroke="#505050" strokeWidth="1.300" />
      </Svg>
    </DockItem>
  </Panel>
);

const Toolbox = () => (
  <Panel $w={39}>
    <Collapse aria-label="折叠工具"><Twist /></Collapse>
    <TabStrip><StripEnd aria-label="面板菜单"><Burger /></StripEnd></TabStrip>
    <ToolGroup $top={3}>{renderTools(tools1)}</ToolGroup>
    <ToolGroup>{renderTools(tools2)}</ToolGroup>
    <ToolGroup>{renderTools(tools3)}</ToolGroup>
    <ToolGroup $bottom={4}>{renderTools(tools4)}</ToolGroup>
    <ToolGroup $top={7} $bottom={6}>
      <Svg w={14} h={14}>
        <path d="M10 0l4 4-3 3-4-4z" fill="#e6e6e6" />
        <path d="M7 3.500l3.500 3.500-5 5L2 8.500z" fill="#8b8b8b" stroke="#c6c6c6" strokeWidth=".8" />
        <path d="M2 9l3 3-4 1.500z" fill="#222" />
      </Svg>
      <Swatch $c="#c3c3c3" $top={6} $bottom={9} aria-label="笔触颜色" />
      <FillMode aria-label="填充">
        <Svg w={12} h={12}>
          <path d="M.5 .5h11v11H.5z" stroke="#ccc" />
          <path d="M2 2h8v8H2z" fill="#aaa" />
        </Svg>
      </FillMode>
      <Swatch $c={c.cyan} $top={3} $bottom={8} aria-label="填充颜色" />
      <Svg w={28} h={13}>
        <path d="M5 4h7v8H5z" fill="#222" stroke="#8a8a8a" />
        <path d="M1 1h7v7H1z" fill="#fff" stroke="#222" strokeWidth="1.500" />
        <path d="M16 1h4v5h-4z" fill="#000" stroke="#ccc" />
        <path d="M16 7h4v5h-4z" fill="#fff" stroke="#ccc" />
        <path d="M22 3.500c4-1 5.500 5 .5 6.500" stroke={c.icon} strokeWidth="1.500" />
        {tri("M21 3.500L24 0v6zM20.500 10L24 7v6z")}
      </Svg>
    </ToolGroup>
    <ToolGroup $top={4} $last>
      <Tool $on aria-label="贴紧至对象">
        <Svg w={14} h={15}>
          <path d="M2 11V6.500C2 0 12 0 12 6.500V11" stroke={c.icon} strokeWidth="4" />
          <path d="M0 11h4v4H0zM10 11h4v4h-4z" fill="#7c7c7c" />
        </Svg>
      </Tool>
      <Tool aria-label="平滑">
        <Svg w={12} h={16}>
          <path d="M8.500 1C3 0 1 4 4 6.500 8 8 10 10 8.500 13 7 15.500 4 15.500 2 14.500" stroke={c.icon} strokeWidth="1.400" />
        </Svg>
      </Tool>
      <Tool aria-label="伸直">
        <Svg w={10} h={16}>
          <path d="M2.500 0v6.500h6V16" stroke={c.icon} strokeWidth="1.200" />
        </Svg>
      </Tool>
    </ToolGroup>
  </Panel>
);

const FrameMenu = () => (
  <Menu>
    {contextMenu.map((group, i) => (
      <React.Fragment key={i}>
        {i > 0 && <MenuRule />}
        {group.map(([label, enabled, mode]) => (
          <li key={label}>
            <MenuItem disabled={!enabled} $hot={mode === "hot"}>
              {label}
              {mode === "sub" && <Svg w={5} h={8}><path d="M0 0v8l4.500-4z" fill="#000" /></Svg>}
            </MenuItem>
          </li>
        ))}
      </React.Fragment>
    ))}
  </Menu>
);

export default function App() {
  return (
    <Window>
      <Global />
      <Title />
      <Body>
        <Main>
          <Document />
          <TimelinePanel />
        </Main>
        <Dock />
        <Properties />
        <Toolbox />
      </Body>
      <FrameMenu />
      <Marker $x={746} $y={508} $w={99} $h={48} />
      <Marker $x={325} $y={953} $w={424} $h={73} />
      <ArrowMark width="164" height="38" viewBox="0 0 164 38" aria-hidden="true">
        <path d="M0 1.500l139 17 1.500-6L160.500 26 136 34.500l1-5.500L0 3z" fill={c.red} />
      </ArrowMark>
      <Meter />
      <Watermark>最需教育</Watermark>
    </Window>
  );
}
